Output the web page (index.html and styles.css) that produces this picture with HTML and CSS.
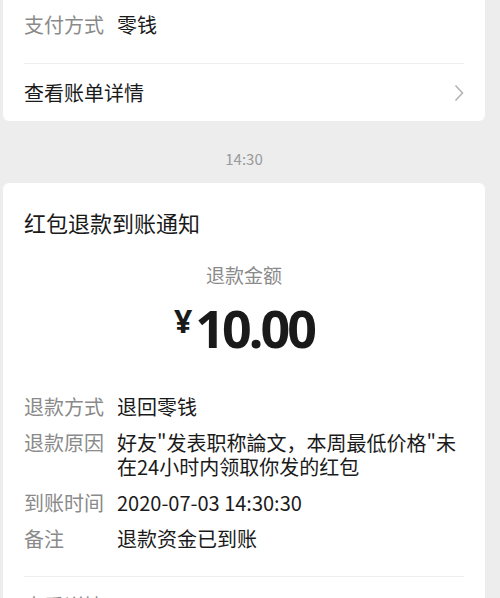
FILE: index.html
```html
<!DOCTYPE html>
<html lang="zh-CN">
<head>
	<meta charset="UTF-8">
	<title>红包退款到账通知</title>
	<link rel="stylesheet" href="styles.css">
</head>
<body>
	<div id="page">
		<div class="card card-top">
			<div class="pay-row">
				<span class="label">支付方式</span>
				<span class="value">零钱</span>
			</div>
			<div class="divider"></div>
			<div class="link-row">
				<span>查看账单详情</span>
				<svg class="chevron" width="10" height="18" viewBox="0 0 10 18"><path d="M1.5 1.5 L8.5 9 L1.5 16.5" fill="none" stroke="#b4b4b4" stroke-width="1.6"/></svg>
			</div>
		</div>

		<div class="time">14:30</div>

		<div class="card">
			<div class="title">红包退款到账通知</div>
			<div class="amount-label">退款金额</div>
			<div class="amount"><span class="yen">¥</span>10.00</div>
			<div class="details">
				<div class="d-row">
					<span class="label">退款方式</span>
					<span class="value">退回零钱</span>
				</div>
				<div class="d-row">
					<span class="label">退款原因</span>
					<span class="value">好友"发表职称論文，本周最低价格"未在24小时内领取你发的红包</span>
				</div>
				<div class="d-row">
					<span class="label">到账时间</span>
					<span class="value">2020-07-03 14:30:30</span>
				</div>
				<div class="d-row">
					<span class="label">备注</span>
					<span class="value">退款资金已到账</span>
				</div>
			</div>
			<div class="divider"></div>
			<div class="link-row">
				<span class="muted">查看详情</span>
				<svg class="chevron" width="10" height="18" viewBox="0 0 10 18"><path d="M1.5 1.5 L8.5 9 L1.5 16.5" fill="none" stroke="#b4b4b4" stroke-width="1.6"/></svg>
			</div>
		</div>
	</div>
</body>
</html>
```

FILE: styles.css
```css
body {
	margin: 0;
	background-color: #ededed;
	font-family: "Noto Sans CJK SC", "Noto Sans", sans-serif;
	color: #1a1a1a;
	overflow: hidden;
}
#page {
	padding: 0 15px 0 3px;
}
.card {
	background-color: white;
	border-radius: 6px;
	padding: 0 21px;
}
.card-top {
	border-radius: 0 0 6px 6px;
}
.label {
	color: #8a8a8a;
	width: 93px;
	flex-shrink: 0;
}
.pay-row {
	display: flex;
	font-size: 20px;
	line-height: 24px;
	padding: 13px 0 26px 0;
}
.divider {
	height: 1px;
	background-color: #efefef;
}
.link-row {
	display: flex;
	justify-content: space-between;
	align-items: center;
	height: 57px;
	font-size: 20px;
}
.muted {
	color: #8a8a8a;
}
.time {
	text-align: center;
	font-size: 15px;
	line-height: 20px;
	color: #9a9a9a;
	padding: 28px 0 14px 0;
}
.title {
	font-size: 22px;
	line-height: 28px;
	padding-top: 25px;
}
.amount-label {
	text-align: center;
	color: #8a8a8a;
	font-size: 19px;
	line-height: 24px;
	margin-top: 27px;
}
.amount {
	text-align: center;
	font-family: "Noto Sans", sans-serif;
	font-size: 52px;
	line-height: 52px;
	font-weight: bold;
	letter-spacing: -3px;
	margin-top: 15px;
}
.yen {
	font-size: 32px;
	line-height: 32px;
	vertical-align: 15px;
	letter-spacing: 0;
	margin-right: 3px;
}
.details {
	display: flex;
	flex-direction: column;
	gap: 12px;
	margin-top: 41px;
	padding-bottom: 25px;
}
.d-row {
	display: flex;
	font-size: 20px;
	line-height: 24px;
}
```
